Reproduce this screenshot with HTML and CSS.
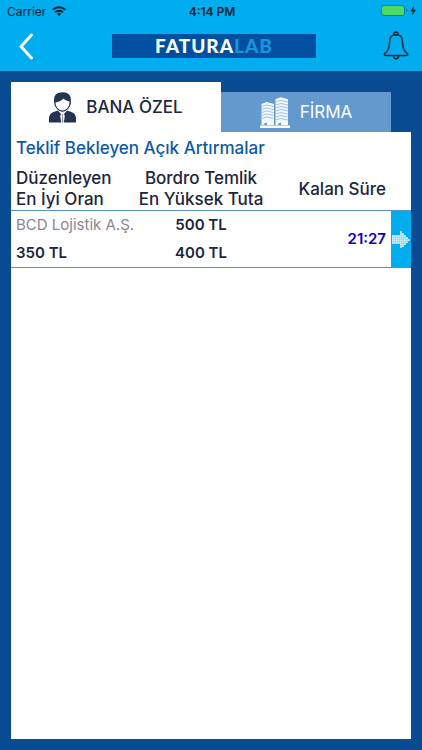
FILE: index.html
```html
<!DOCTYPE html>
<html lang="tr">
<head>
<meta charset="utf-8">
<meta name="viewport" content="width=device-width, initial-scale=1">
<title>Faturalab</title>
<link rel="stylesheet" href="styles.css">
</head>
<body>
<header class="top">
  <div class="status">
    <div class="carrier">
      <span>Carrier</span>
      <svg width="14" height="10" viewBox="0 0 14 10" fill="none" stroke="#06202c" stroke-width="2" aria-hidden="true">
        <path d="M.7 3.800a9 9 0 0 1 12.600 0M3 6.300a5.800 5.800 0 0 1 8 0"/>
        <path d="M7 10 4.900 7.900a3 3 0 0 1 4.200 0z" fill="#06202c" stroke="none"/>
      </svg>
    </div>
    <span class="clock">4:14 PM</span>
    <div class="battery">
      <svg width="36" height="12" viewBox="0 0 36 12" aria-hidden="true">
        <rect x=".5" y=".5" width="23" height="10" rx="2.5" fill="#4cd964" stroke="#087fa8"/>
        <path d="M25 4v3q1.500-.3 1.500-1.500T25 4z" fill="#087fa8"/>
        <path d="M33 .5 29.300 6.300h2.500L31 10.800l4-6h-2.600z" fill="#06202c"/>
      </svg>
    </div>
  </div>
  <nav class="bar">
    <button class="icon-button back" aria-label="Geri">
      <svg width="18" height="28" viewBox="0 0 18 28" fill="none" stroke="#fff" stroke-width="3" stroke-linecap="round" stroke-linejoin="round"><path d="M13.500 3 3 14.500 13.500 26"/></svg>
    </button>
    <h1 class="logo">FATURA<span>LAB</span></h1>
    <button class="icon-button bell" aria-label="Bildirimler">
      <svg width="28" height="30" viewBox="0 0 28 30" fill="none" stroke="#0a2938" stroke-width="1.500" stroke-linejoin="round">
        <path d="M12 3.700C8.500 4.600 7.500 7.500 7.500 11.500c0 5.500-1 8.200-4.700 11-1 .9-.6 2 .7 2h21c1.300 0 1.700-1.100.7-2-3.700-2.800-4.700-5.500-4.700-11 0-4-1-6.900-4.500-7.800z"/>
        <path d="M12 4V3a2 2 0 0 1 4 0v1zM11.500 24.700a2.500 3 0 0 0 5 0"/>
      </svg>
    </button>
  </nav>
</header>
<main class="content">
  <div class="tabs" role="tablist">
    <button class="tab active" role="tab" aria-selected="true">
      <svg width="27" height="31" viewBox="0 0 27 31" aria-hidden="true">
        <path d="M0 30.500V27q0-5.500 4.500-7l4.300-1.600Q11 20.500 12 22l-.8 2 1 6.500zM27 30.500V27q0-5.500-4.500-7l-4.300-1.600Q16 20.500 15 22l.8 2-1 6.500z" fill="#253353"/>
        <path d="m12.700 22.300.8-.6.800.6-.4 1.700.5 6.500h-1.800l.5-6.500z" fill="#8d94a6"/>
        <path d="M5 8.500Q4.500.2 13.700.2 22.500.4 22 9c.3 5.500-4 10.700-8.500 10.700S4.700 14.500 5 8.500z" fill="#253353"/>
        <path d="M6.500 10.500c4-.8 6-1.800 7.800-4 1.200 1.500 4 2.300 6.200 3 .3 5-3.200 9-7 9s-7-3.800-7-8z" fill="#fff"/>
      </svg>
      <span>BANA ÖZEL</span>
    </button>
    <button class="tab" role="tab" aria-selected="false">
      <svg width="30" height="31" viewBox="0 0 30 31" aria-hidden="true">
        <path d="M1.500 28V7l5-2 7.500 2v21zM15.500 28V2L21 .2 28 2.200V28z" fill="#f0f6fc"/>
        <path d="M1.500 9.500l5-1.500 7.500 1.500m-12.500 3 5-1.500 7.500 1.500m-12.500 3 5-1.500 7.500 1.500m-12.500 3 5-1.500 7.500 1.500m-12.500 3 5-1.500 7.500 1.500M15.500 5l5.500-1.500L28 5M15.500 8 21 6.500 28 8m-12.500 3L21 9.500l7 1.500m-12.500 3 5.500-1.500 7 1.500m-12.500 3 5.500-1.500 7 1.500m-12.500 3 5.500-1.500 7 1.500m-12.500 3 5.500-1.500 7 1.500" fill="none" stroke="#8fb8dd" stroke-width=".8"/>
        <path d="M0 28.500h30V31H0zM2.500 28v-2.500q5-3 10.500 0V28zM16.500 28v-2.500q5-3 10.500 0V28z" fill="#fff"/>
        <path d="M4 28q0-2.500 3-2.500V28zM18 28q0-2.500 3-2.500V28z" fill="#6399cd"/>
      </svg>
      <span>FİRMA</span>
    </button>
  </div>
  <section class="panel">
    <h2>Teklif Bekleyen Açık Artırmalar</h2>
    <table>
      <colgroup><col class="issuer"><col class="amount"><col class="time"><col class="go"></colgroup>
      <thead>
        <tr>
          <th scope="col">Düzenleyen<br>En İyi Oran</th>
          <th scope="col">Bordro Temlik<br>En Yüksek Tuta</th>
          <th scope="col">Kalan Süre</th>
          <td></td>
        </tr>
      </thead>
      <tbody>
        <tr>
          <td><span class="company">BCD Lojistik A.Ş.</span><br>350 TL</td>
          <td>500 TL<br>400 TL</td>
          <td class="remaining">21:27</td>
          <td class="open">
            <button aria-label="Detay">
              <svg width="18" height="18" viewBox="0 0 18 18" aria-hidden="true">
                <defs><pattern id="dots" width="2" height="2" patternUnits="userSpaceOnUse"><rect width="1.600" height="1.600" fill="#c9effd"/></pattern></defs>
                <path d="M0 5h8V1h2v2h2v2h2v2h2v2h2v2h-2v2h-2v2h-2v2h-2v1H8v-4H0z" fill="#6fd0f7"/>
                <path d="M0 5h8V1h2v2h2v2h2v2h2v2h2v2h-2v2h-2v2h-2v2h-2v1H8v-4H0z" fill="url(#dots)"/>
              </svg>
            </button>
          </td>
        </tr>
      </tbody>
    </table>
  </section>
</main>
</body>
</html>
```
FILE: styles.css
```css
* { box-sizing: border-box; }

body {
  display: flex;
  flex-direction: column;
  min-height: 100vh;
  margin: 0;
  background: #0a4c91;
  color: #20263b;
  font-family: Inter, "Liberation Sans", sans-serif;
}

button {
  margin: 0;
  padding: 0;
  border: 0;
  background: none;
  color: inherit;
  font: inherit;
  cursor: pointer;
}

svg { display: block; flex: none; }

.top {
  padding-bottom: 6px;
  background: #00adef;
}

.status {
  display: grid;
  grid-template-columns: 1fr auto 1fr;
  align-items: center;
  height: 22px;
  padding: 0 5px 0 7px;
  color: #06202c;
  font-size: 12px;
}

.carrier { display: flex; align-items: center; gap: 6px; }
.clock { font-weight: 600; }
.battery { justify-self: end; }

.bar {
  display: grid;
  grid-template-columns: 1fr 52% 1fr;
  align-items: center;
  height: 43px;
  padding: 5px 12px 0 18px;
}

.icon-button { justify-self: start; }
.bell { justify-self: end; }

.logo {
  height: 24px;
  margin: 0;
  background: #004fa0;
  color: #fff;
  font: 900 19px/24px Lato, sans-serif;
  letter-spacing: 1px;
  text-align: center;
}

.logo span { color: #1596dc; }

.content {
  display: flex;
  flex: 1;
  flex-direction: column;
  padding: 11px;
}

.tabs {
  display: flex;
  align-items: flex-end;
  padding-right: 5%;
}

.tab {
  display: flex;
  flex: 17;
  align-items: center;
  justify-content: center;
  gap: 10px;
  height: 40px;
  background: #6399cd;
  color: #fff;
  font-size: 17px;
}

.tab.active {
  flex: 21;
  height: 50px;
  background: #fff;
  color: #20263b;
  font-weight: 500;
}

.panel {
  flex: 1;
  background: #fff;
}

h2 {
  margin: 0;
  padding: 4px 5px;
  color: #0b5aa6;
  font-size: 17px;
  font-weight: 500;
  line-height: 24px;
}

table {
  width: 100%;
  border-collapse: collapse;
  table-layout: fixed;
}

.issuer, .time { width: 31%; }
.amount { width: 33%; }
.go { width: 5%; }

th, td {
  padding: 0;
  font-weight: 500;
  text-align: center;
  white-space: nowrap;
}

th {
  padding: 4px 0 0;
  font-size: 17px;
  line-height: 21px;
}

th:first-child, td:first-child { padding-left: 5px; text-align: left; }
th:nth-child(3), td.remaining { padding-right: 5px; text-align: right; }

tbody tr {
  border-top: 1px solid #5a8fc2;
  border-bottom: 1px solid #5a8fc2;
}

tbody td {
  font-size: 15px;
  font-weight: 600;
  line-height: 28px;
}

.company { color: #8b8693; font-weight: 400; }
.remaining { color: #0d00c4; }

.open { background: #00adef; }
.open button { display: block; margin: 0 auto; }
```
